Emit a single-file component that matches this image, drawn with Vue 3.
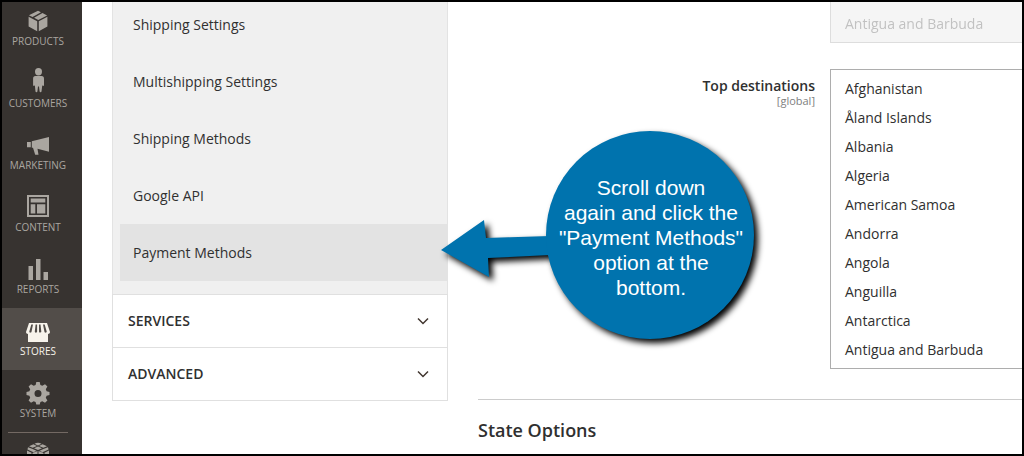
<script setup>
import { ref } from 'vue'

const menu = [
  { label: 'Products', icon: 'products' },
  { label: 'Customers', icon: 'customers' },
  { label: 'Marketing', icon: 'marketing' },
  { label: 'Content', icon: 'content' },
  { label: 'Reports', icon: 'reports' },
  { label: 'Stores', icon: 'stores', active: true },
  { label: 'System', icon: 'system' },
  { icon: 'partners', divided: true }
]

const icons = {
  products:
    'M12 4.700l3 1.500-8.500 4.800-3.600-1.700zM16.500 7l4.600 2.400-8.800 4.500-4.200-2.100zM2.600 10.800l8.600 4.500v9.900l-8.600-4.700zM21.400 10.800v9.700l-8.600 4.700v-9.900z',
  customers:
    'M12.500 0a3.500 3.700 0 1 1 0 7.400a3.500 3.700 0 1 1 0-7.400zM9.500 8h6c1.800 0 2.500 1 2.500 2.800V17c0 1.400-1.600 1.400-1.700 0l-.8 6.500c-.2 1-1.700 1-1.900 0l-.6-5h-1l-.6 5c-.2 1-1.700 1-1.900 0L8.800 17c-.1 1.400-1.700 1.400-1.700 0v-6.200C7.100 9 7.800 8 9.500 8z',
  marketing:
    'M1 12h3.800v5.200H1zM5.800 11.300L23 7v14.800l-11.500-3 1 5.900H9.200L7 17.800H5.800z',
  content:
    'M1 3h22v22H1zM3 5v18h18V5zM4.700 6.500h14.600v4H4.700zM4.700 12.200h4.600v9.300H4.700zM11 12.200h8.300v9.300H11z',
  reports: 'M2.500 12h4.500v14H2.500zM10 5h4.500v21H10zM17.500 18h4.500v8h-4.500z',
  stores:
    'M3 7h18l3 9c0 1.200-1 2-2 2v8H2v-8c-1 0-2-.8-2-2zM5.300 8.500L3.300 15.500c0 1.600 2 1.600 2.300 0L7 8.500zM9.600 8.500l-.8 7c0 1.600 2.300 1.600 2.300 0V8.500zM13 8.500v7c0 1.600 2.300 1.600 2.300 0l-.8-7zM17 8.500l1.400 7c.3 1.600 2.300 1.600 2.300 0l-2-7z',
  system:
    'M10.300 4h3.400l.7 3 1.900.8L19 6.200l2.400 2.400-1.600 2.700.8 1.900 2.900.7v3.200l-2.900.7-.8 1.900 1.600 2.700-2.400 2.400-2.700-1.600-1.900.8-.7 2.500h-3.400L9.600 24l-1.900-.8L5 24.800l-2.400-2.400 1.600-2.700-.8-1.900-2.900-.7v-3.200l2.900-.7.8-1.900-1.600-2.700L5 6.200l2.700 1.600 1.900-.8zM12 12a3.500 3.500 0 1 0 0 7a3.500 3.500 0 1 0 0-7z',
  partners:
    'M8.500 3.800q3.500-2 7 0l-3.500 1.700zM3 6.300l4.500-2 3.500 1.700-4.300 1.800zM21 6.300l-4.500-2-3.500 1.700 4.300 1.800zM8 8.200l4-1.700 4 1.700-4 1.700zM2 7.200l4 1.500 4.500 2-3 1.500-6-2.700zM22 7.200l-4 1.500-4.500 2 3 1.500 6-2.700zM1 10.500l4.500 2.200v7L1 17.500zM23 10.500l-4.500 2.200v7l4.500-2.200zM6.500 13l5-2v9l-5-2zM17.500 13l-5-2v9l5-2z'
}

const links = [
  'Shipping Settings',
  'Multishipping Settings',
  'Shipping Methods',
  'Google API',
  'Payment Methods'
]
const current = ref('Payment Methods')
const sections = ['Services', 'Advanced']
const countries = [
  'Afghanistan',
  'Åland Islands',
  'Albania',
  'Algeria',
  'American Samoa',
  'Andorra',
  'Angola',
  'Anguilla',
  'Antarctica',
  'Antigua and Barbuda'
]
</script>

<template>
  <div class="frame">
    <nav class="menu">
      <a
        v-for="item in menu"
        :key="item.icon"
        href="#"
        class="menu-item"
        :class="{ active: item.active, divided: item.divided }"
      >
        <svg class="menu-icon" viewBox="0 0 24 28" aria-hidden="true">
          <path :d="icons[item.icon]" fill-rule="evenodd" />
        </svg>
        <span v-if="item.label">{{ item.label }}</span>
      </a>
    </nav>

    <aside class="config">
      <div class="config-links">
        <a
          v-for="link in links"
          :key="link"
          href="#"
          class="config-link"
          :class="{ current: link === current }"
          @click.prevent="current = link"
        >{{ link }}</a>
      </div>
      <button v-for="section in sections" :key="section" type="button" class="section">
        <span>{{ section }}</span>
        <svg class="chevron" viewBox="0 0 12 8" aria-hidden="true">
          <path d="M1 1.500l5 5 5-5" />
        </svg>
      </button>
    </aside>

    <main class="content">
      <div class="field">
        <span></span>
        <select class="list inherited" multiple size="1" disabled>
          <option>Antigua and Barbuda</option>
        </select>
      </div>
      <div class="field">
        <label class="field-label" for="top-destinations">
          Top destinations
          <small>[global]</small>
        </label>
        <select id="top-destinations" class="list" multiple size="10">
          <option v-for="country in countries" :key="country">{{ country }}</option>
        </select>
      </div>
      <h2 class="heading">State Options</h2>
    </main>

    <div class="callout">
      <svg class="callout-shape" viewBox="0 0 340 240" aria-hidden="true">
        <path d="M11 130L54 100 56 118 120 116V135L58 138 59 157z" />
        <circle cx="220" cy="115" r="104" />
      </svg>
      <p class="callout-text">
        Scroll down<br />again and click the<br />"Payment Methods"<br />option at the<br />bottom.
      </p>
    </div>
  </div>
</template>

<style>
body {
  margin: 0;
}
</style>

<style scoped>
.frame {
  position: relative;
  display: flex;
  box-sizing: border-box;
  height: 100vh;
  overflow: hidden;
  border: 2px solid #000;
  background: #fff;
  color: #303030;
  font: 14px/19px "Open Sans", "Noto Sans", sans-serif;
}

.frame a {
  text-decoration: none;
}

.menu {
  flex: 0 0 80px;
  margin-top: -4px;
  background: #373330;
}

.menu-item {
  position: relative;
  display: flex;
  flex-direction: column;
  align-items: center;
  box-sizing: border-box;
  height: 62px;
  padding: 8px 8px 0 0;
  color: #aaa6a0;
  font-size: 10px;
  line-height: 14px;
  text-transform: uppercase;
}

.menu-item.active {
  background: #524d49;
  color: #f7f3eb;
}

.menu-item.divided::before {
  content: "";
  position: absolute;
  top: 0;
  left: 6px;
  width: 60px;
  border-top: 1px solid #736963;
}

.menu-icon {
  flex: none;
  width: 24px;
  height: 28px;
  fill: currentColor;
}

.config {
  flex: 0 0 336px;
  box-sizing: border-box;
  margin-left: 30px;
}

.config-links {
  margin-top: -6px;
  padding: 0 0 13px 7px;
  border: 1px solid #e3e3e3;
  border-top: 0;
  border-bottom: 0;
  background: #f0f0f0;
}

.config-link {
  display: block;
  padding: 19px 13px;
  color: #303030;
}

.config-link.current {
  background: #e3e3e3;
}

.section {
  display: flex;
  align-items: center;
  justify-content: space-between;
  box-sizing: border-box;
  width: 100%;
  height: 53px;
  padding: 0 18px 1px 15px;
  border: 1px solid #e0e0e0;
  border-bottom: 0;
  background: #fff;
  color: #303030;
  font: 600 14px/19px "Open Sans", "Noto Sans", sans-serif;
  text-transform: uppercase;
}

.section:last-child {
  height: 54px;
  border-bottom: 1px solid #e0e0e0;
}

.chevron {
  width: 12px;
  height: 8px;
  fill: none;
  stroke: #41362f;
  stroke-width: 1.5;
}

.content {
  flex: 1;
  min-width: 0;
  margin-left: 30px;
}

.field {
  display: grid;
  grid-template-columns: 337px 1fr;
  column-gap: 15px;
  margin-bottom: 26px;
}

.field-label {
  padding-top: 7px;
  font-weight: 600;
  text-align: right;
}

.field-label small {
  display: block;
  color: #808080;
  font-size: 11px;
  font-weight: 400;
  line-height: 12px;
}

.list {
  box-sizing: border-box;
  width: 100%;
  height: 300px;
  margin: 0;
  padding: 4px 0;
  overflow: hidden;
  border: 1px solid #adadad;
  border-right: 0;
  border-radius: 0;
  outline: 0;
  background: #fff;
  color: #303030;
  font: inherit;
}

.list option {
  min-height: 19px;
  padding: 5px 14px;
}

.list.inherited {
  height: 41px;
  padding: 7px 0 4px;
  border-top: 0;
  border-color: #d0d0d0;
  background: #f2f2f2;
}

.list.inherited option {
  color: #a8a8a8;
}

.heading {
  margin: 30px 0 0;
  padding-top: 19px;
  border-top: 1px solid #ccc;
  font-size: 18px;
  font-weight: 600;
  line-height: 23px;
}

.callout {
  position: absolute;
  top: 118px;
  left: 428px;
  width: 340px;
  height: 240px;
  pointer-events: none;
}

.callout-shape {
  display: block;
  width: 100%;
  height: 100%;
  overflow: visible;
  fill: #0073ae;
  filter: drop-shadow(4px 4px 3px #000);
}

.callout-text {
  position: absolute;
  top: 55px;
  left: 117px;
  width: 208px;
  margin: 0;
  color: #fff;
  font: 21px/25px "Liberation Sans", Arial, sans-serif;
  text-align: center;
}
</style>
